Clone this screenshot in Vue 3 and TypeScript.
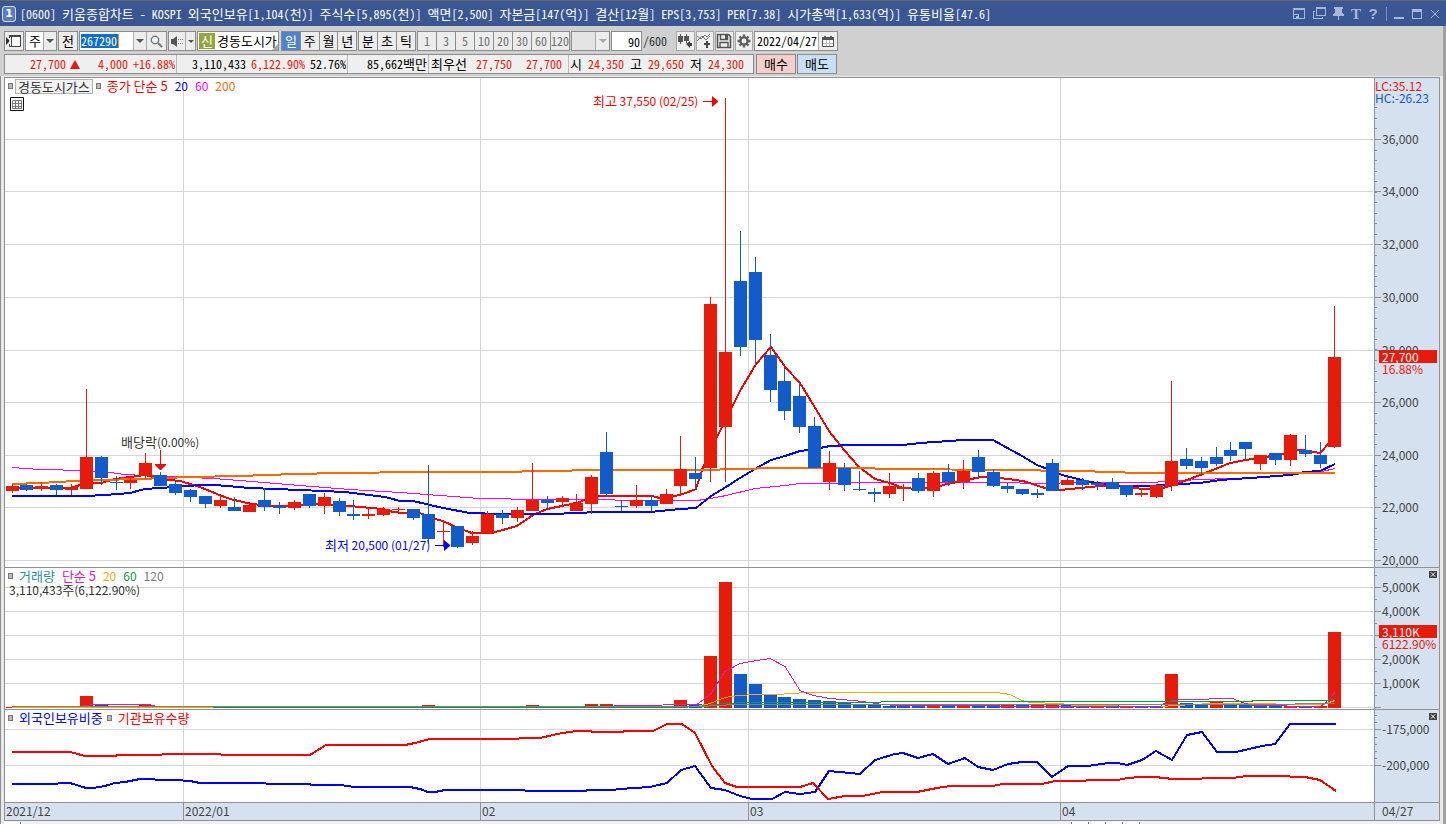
<script setup lang="ts">
import { ref } from 'vue'

type Side = 'r' | 'b'
type Candle = [Side, number, number, number, number]
interface Line { color: string; width: number; points: string }
interface Tick { label: string; y: number }

const PLOT_LEFT = 5
const PLOT_WIDTH = 1369
const PRICE_TOP = 78
const PRICE_HEIGHT = 489
const VOLUME_TOP = 568
const VOLUME_HEIGHT = 141
const HOLD_TOP = 710
const HOLD_HEIGHT = 92
const VOLUME_BASE = 708

const code = ref('267290')
const count = ref('90')
const date = ref('2022/04/27')
const period = ref('일')

const title = '[0600] 키움종합차트 - KOSPI 외국인보유[1,104(천)] 주식수[5,895(천)] 액면[2,500] 자본금[147(억)] 결산[12월] EPS[3,753] PER[7.38] 시가총액[1,633(억)] 유통비율[47.6]'
const titleParts = title.split(/([가-힣]+)/).map((text, i) => ({ text, hangul: i % 2 === 1 }))

const periods = ['일', '주', '월', '년']
const intraday = ['분', '초', '틱']
const minutes = ['1', '3', '5', '10', '20', '30', '60', '120']

const centre = (i: number) => Math.floor(12 + 14.865 * i)
const pctX = (x: number) => `${((x - PLOT_LEFT) / PLOT_WIDTH) * 100}%`
const pctY = (y: number, top: number, height: number) => `${((y - top) / height) * 100}%`

// side, high, body top, body bottom, low
const candles: Candle[] = [
  ['r', 484, 486, 491, 493], ['b', 484, 485, 490, 491], ['r', 482, 486, 489, 491], ['b', 484, 485, 490, 495],
  ['r', 484, 487, 490, 495], ['r', 389, 457, 489, 489], ['b', 456, 457, 478, 485], ['b', 476, 482, 483, 490],
  ['r', 476, 480, 483, 489], ['r', 453, 463, 476, 479], ['b', 472, 475, 486, 486], ['b', 482, 484, 493, 495],
  ['b', 489, 490, 497, 502], ['b', 496, 496, 504, 508], ['r', 495, 500, 506, 508], ['b', 497, 507, 511, 511],
  ['r', 504, 505, 512, 512], ['b', 488, 500, 507, 511], ['b', 502, 506, 508, 514], ['r', 500, 502, 508, 510],
  ['b', 494, 494, 506, 508], ['r', 493, 497, 506, 514], ['b', 498, 501, 512, 516], ['b', 500, 514, 516, 520],
  ['r', 509, 514, 516, 519], ['r', 507, 509, 515, 516], ['r', 507, 509, 510, 513], ['b', 509, 509, 518, 520],
  ['b', 465, 514, 539, 544], ['r', 522, 531, 532, 547], ['b', 526, 526, 547, 548], ['r', 531, 536, 543, 545],
  ['r', 511, 514, 533, 533], ['b', 510, 514, 518, 524], ['r', 507, 510, 518, 522], ['r', 463, 500, 511, 511],
  ['b', 496, 500, 503, 508], ['r', 496, 498, 502, 506], ['r', 494, 503, 511, 511], ['r', 475, 477, 504, 514],
  ['b', 432, 452, 494, 497], ['b', 500, 506, 507, 511], ['r', 485, 500, 506, 508], ['b', 497, 500, 506, 511],
  ['r', 489, 494, 504, 504], ['r', 436, 469, 486, 496], ['b', 457, 473, 479, 489], ['r', 297, 304, 468, 482],
  ['r', 98, 352, 427, 482], ['b', 231, 281, 347, 356], ['b', 257, 272, 340, 364], ['b', 334, 355, 390, 402],
  ['b', 368, 381, 411, 420], ['b', 382, 396, 427, 433], ['b', 417, 426, 468, 468], ['r', 451, 463, 482, 490],
  ['b', 463, 468, 485, 491], ['b', 471, 489, 490, 491], ['b', 488, 492, 494, 502], ['r', 473, 486, 494, 498],
  ['r', 484, 487, 489, 501], ['b', 473, 478, 491, 493], ['r', 471, 473, 491, 497], ['b', 464, 472, 482, 486],
  ['r', 460, 471, 482, 489], ['b', 450, 457, 472, 479], ['b', 469, 472, 486, 487], ['b', 483, 486, 489, 493],
  ['b', 489, 489, 494, 495], ['b', 489, 493, 495, 498], ['b', 459, 463, 491, 491], ['r', 477, 480, 485, 485],
  ['b', 478, 480, 485, 490], ['b', 481, 483, 485, 490], ['b', 478, 482, 489, 489], ['b', 485, 485, 495, 497],
  ['r', 490, 493, 495, 497], ['r', 484, 485, 497, 498], ['r', 381, 461, 486, 491], ['b', 448, 459, 466, 469],
  ['b', 457, 461, 468, 474], ['b', 447, 457, 464, 466], ['b', 442, 450, 456, 461], ['b', 442, 442, 449, 459],
  ['r', 455, 455, 464, 470], ['b', 453, 453, 460, 465], ['r', 434, 435, 460, 466], ['b', 435, 450, 454, 457],
  ['b', 442, 455, 464, 468], ['r', 306, 357, 447, 448],
]

const volumeTops: Record<number, [Side, number]> = {
  5: ['r', 696], 6: ['b', 705], 9: ['r', 705], 28: ['r', 705], 35: ['r', 705], 39: ['r', 704], 40: ['r', 704],
  41: ['b', 706], 42: ['b', 706], 43: ['b', 706], 44: ['r', 706], 45: ['r', 700], 46: ['b', 704], 47: ['r', 656],
  48: ['r', 582], 49: ['b', 674], 50: ['b', 684], 51: ['b', 694], 52: ['b', 697], 53: ['b', 699], 54: ['b', 700],
  55: ['b', 701], 56: ['b', 703], 57: ['b', 704], 58: ['b', 705], 59: ['b', 706], 60: ['b', 705], 61: ['b', 706],
  62: ['r', 705], 63: ['b', 705], 64: ['r', 705], 65: ['b', 705], 66: ['b', 705], 67: ['r', 705], 68: ['b', 705],
  69: ['r', 705], 70: ['r', 705], 71: ['b', 705], 72: ['b', 705], 73: ['r', 705], 74: ['b', 705], 75: ['r', 706],
  76: ['b', 706], 77: ['b', 706], 78: ['r', 674], 79: ['b', 703], 80: ['b', 705], 81: ['r', 702], 82: ['b', 704],
  83: ['b', 705], 84: ['b', 706], 85: ['b', 706], 86: ['r', 706], 87: ['b', 706], 88: ['r', 706], 89: ['r', 632],
}
const volumes = candles.map((c, i) => {
  const [side, top] = volumeTops[i] ?? [c[0], 707]
  return { side, top, x: centre(i) - 6 }
})

const priceLines: Line[] = [
  { color: '#ff00ff', width: 1, points: '12,467.5 40,469.5 85,470.5 110,472.5 125,474.5 165,476.5 190,477.5 213,478.5 240,480.5 300,485.5 350,489.5 400,492.5 480,498.5 540,499.5 600,499.5 630,500.5 697,500.5 711,498.5 726,495.5 755,488.5 785,485.5 800,483.5 900,482.5 1000,482.5 1040,483.5 1080,482.5 1150,482.5 1200,479.5 1260,477.5 1295,474.5 1322,471.5 1335,468.5' },
  { color: '#ff0000', width: 2, points: '12,488 71,488 86,483 101,483 115,479 145,475 160,479 180,481 200,487 217,494 230,499 247,503 267,506 287,506 320,504 340,505 360,507 383,509 393,512 402,513 420,513 435,519 443,521 458,528 472,533 492,533 517,526 533,515 547,509 562,506 580,502 590,497 600,496 652,496 663,499 683,494 696,489 703,467 717,437 726,419 740,391 756,364 771,347 786,368 800,383 814,406 829,431 844,450 859,467 875,479 890,483 903,488 918,489 933,488 947,484 963,481 980,477 993,477 1023,481 1045,488 1060,490 1080,488 1100,486 1120,486 1143,489 1160,489 1187,480 1203,474 1230,463 1257,458 1280,455 1290,451 1302,450 1320,453 1330,442 1335,437' },
  { color: '#0000ff', width: 2, points: '12,496 86,496 105,495 130,493 145,489 175,487 200,485 215,485 250,488 300,490 345,492 385,497 400,501 413,501 443,508 470,513 500,514 545,514 583,513 592,512 650,512 680,509 696,508 711,496 726,487 740,478 755,469 771,460 785,456 800,451 815,449 830,446 850,445 903,445 920,443 950,441 963,440 993,440 1002,445 1022,456 1037,465 1050,470 1062,475 1090,482 1120,486 1150,486 1180,484 1200,483 1220,480 1250,478 1290,475 1305,472 1320,471 1335,464' },
  { color: '#ff6a00', width: 2, points: '12,484 40,483 75,481 100,480 140,479 190,477 240,476 295,474 340,473 420,472 500,472 545,471 600,470 700,470 740,469 775,468 850,468 900,469 1000,470 1080,471 1140,473 1335,473' },
]

const volumeLines: Line[] = [
  { color: '#f5a800', width: 1, points: '12,707.5 80,707.5 585,707.5 697,706.5 710,703.5 725,697.5 738,695.5 757,694.5 777,694.5 807,692.5 960,692.5 997,692.5 1010,694.5 1022,700.5 1030,702.5 1060,703.5 1075,705.5 1160,706.5 1210,703.5 1253,703.5 1298,704.5 1323,704.5 1335,700.5' },
  { color: '#d81cb4', width: 1, points: '80,706.5 94,704.5 149,704.5 157,706.5 600,706.5 629,705.5 697,704.5 711,693.5 725,671.5 740,663.5 757,660.5 770,658.5 785,666.5 800,690.5 813,695.5 830,698.5 863,701.5 882,704.5 897,705.5 1100,706.5 1160,706.5 1167,701.5 1180,699.5 1208,699.5 1210,698.5 1233,698.5 1242,702.5 1253,705.5 1320,706.5 1325,703.5 1335,692.5' },
  { color: '#0c9a3c', width: 1, points: '213,707.5 680,707.5 697,706.5 725,703.5 747,702.5 880,702.5 882,701.5 1250,701.5 1255,700.5 1328,700.5 1335,699.5' },
  { color: '#808080', width: 1, points: '12,706.5 700,706.5 735,704.5 1290,704.5 1300,703.5 1335,703.5' },
]

const holdLines: Line[] = [
  { color: '#0000ff', width: 2, points: '12,784 56,784 60,783 70,783 86,788 93,788 105,786 115,783 125,782 140,779 150,779 160,780 175,780 190,781 200,783 262,783 270,784 309,784 312,785 340,785 355,787 410,787 420,789 428,792 435,792 445,790 524,790 526,791 583,791 590,790 612,790 620,789 650,787 667,783 681,770 695,766 711,788 725,790 740,796 752,799 772,799 785,792 800,794 815,792 829,771 860,774 875,760 895,754 903,753 918,758 933,754 948,764 965,758 978,767 993,770 1008,764 1022,762 1037,762 1052,777 1068,766 1088,766 1108,763 1118,763 1127,765 1142,760 1156,751 1172,760 1187,735 1202,732 1217,752 1236,752 1262,746 1275,744 1290,724 1336,724' },
  { color: '#ff0000', width: 2, points: '12,752 70,752 85,756 115,756 118,755 160,755 164,754 220,754 222,755 310,755 326,745 405,745 415,743 430,739 518,739 520,738 540,738 562,733 577,731 590,731 593,732 622,732 625,731 653,731 667,724 682,724 695,733 712,766 725,783 737,787 800,787 813,783 828,799 845,796 863,796 882,792 917,792 937,788 950,786 993,786 1002,784 1042,784 1055,781 1118,780 1127,778 1142,777 1155,777 1173,779 1232,778 1247,776 1275,776 1305,777 1320,780 1336,791' },
]

const priceTicks: Tick[] = [
  { label: '36,000', y: 139 }, { label: '34,000', y: 191 }, { label: '32,000', y: 244 }, { label: '30,000', y: 297 },
  { label: '28,000', y: 350 }, { label: '26,000', y: 402 }, { label: '24,000', y: 455 }, { label: '22,000', y: 507 },
  { label: '20,000', y: 560 },
]
const volumeTicks: Tick[] = [
  { label: '5,000K', y: 587 }, { label: '4,000K', y: 611 }, { label: '', y: 635 }, { label: '2,000K', y: 659 },
  { label: '1,000K', y: 683 }, { label: '', y: 707 },
]
const holdTicks: Tick[] = [{ label: '-175,000', y: 729 }, { label: '-200,000', y: 765 }]

const range = (from: number, to: number, step: number) => {
  const out: number[] = []
  for (let v = from; v <= to; v += step) out.push(Math.round(v))
  return out
}
const priceMinor = range(107.4, 560, 10.525)
const volumeMinor = range(575, 707, 12)
const holdMinor = range(715, 765, 7.2)

const months = [
  { label: '2021/12', x: 5 }, { label: '2022/01', x: 183 }, { label: '02', x: 480 }, { label: '03', x: 748 }, { label: '04', x: 1060 },
]
const monthLines = months.slice(1).map((m) => m.x)
</script>

<template>
  <div class="window">
    <header class="titlebar">
      <span class="badge">1</span>
      <h1 class="title"><span v-for="(p, i) in titleParts" :key="i" :class="{ ko: p.hangul }">{{ p.text }}</span></h1>
      <div class="winbtns">
        <button type="button" aria-label="화면 크기"><svg width="13" height="13" viewBox="0 0 13 13"><path d="M0 1H12V12H0ZM1 3V7H6V11H11V3ZM1 8V11H3V9H5V8Z" fill="currentColor" fill-rule="evenodd" /></svg></button>
        <button type="button" aria-label="화면 복사"><svg width="13" height="13" viewBox="0 0 13 13"><path d="M3 0H13V9H3ZM4 2V8H12V2Z" fill="currentColor" fill-rule="evenodd" /><path d="M0 4H2V5H1V11H9V10H10V12H0Z" fill="currentColor" /></svg></button>
        <button type="button" aria-label="고정"><svg width="11" height="14" viewBox="0 0 11 14"><path d="M1 0H10V2H9V6H10V7H11V9H6V13H5V9H0V7H1V6H2V2H1Z" fill="currentColor" /></svg></button>
        <button type="button" aria-label="글꼴" class="glyph">T</button>
        <button type="button" aria-label="도움말" class="glyph q">?</button>
        <i class="sep"></i>
        <button type="button" aria-label="최소화"><svg width="10" height="12" viewBox="0 0 10 12"><path d="M0 9H10V11H0Z" fill="currentColor" /></svg></button>
        <button type="button" aria-label="최대화" class="far"><svg width="10" height="12" viewBox="0 0 10 12"><path d="M0 1H10V11H0ZM1 4V10H9V4Z" fill="currentColor" fill-rule="evenodd" /></svg></button>
        <button type="button" aria-label="닫기" class="far"><svg width="10" height="12" viewBox="0 0 10 12"><path d="M1 2L9 10M9 2L1 10" stroke="currentColor" fill="none" /></svg></button>
      </div>
    </header>

    <div class="body">
      <div class="toolbars">
        <div class="row">
          <button type="button" class="btn w20" aria-label="패널"><svg width="16" height="14" viewBox="0 0 16 14"><path d="M0 3V11L4 7Z" fill="#333" /><path d="M3.5 4V1.5H14.5V12.5H3.5V10" fill="#fff" stroke="#444" /><path d="M3 1H15V3H3ZM5 3H6V13H5Z" fill="#444" /></svg></button>
          <div class="combo w32 ko"><select aria-label="종류"><option>주</option></select><i class="arrow"></i></div>
          <button type="button" class="btn w20 ko">전</button>
          <div class="combo code">
            <input v-model="code" class="codeinput" aria-label="종목코드" />
            <span class="spacer"></span>
            <button type="button" class="cell" aria-label="목록"><i class="tri"></i></button>
            <button type="button" class="cell search" aria-label="검색"><svg width="13" height="13" viewBox="0 0 13 13"><circle cx="5" cy="5" r="3.7" fill="#eef4f8" stroke="#777" stroke-width="1.4" /><path d="M8 8L12 12" stroke="#777" stroke-width="2" /></svg></button>
          </div>
          <div class="combo sound">
            <button type="button" class="cell wide" aria-label="소리"><svg width="14" height="13" viewBox="0 0 14 13"><path d="M1 4H3L7 1V12L3 9H1Z" fill="#555" /><path d="M8 4h1v1h-1zM8 8h1v1h-1zM10 4h1v1h-1zM10 8h1v1h-1zM12 4h1v1h-1zM12 8h1v1h-1z" fill="#777" /></svg></button>
            <button type="button" class="cell thin" aria-label="소리 목록"><i class="tri small"></i></button>
          </div>
          <div class="combo name ko"><b class="new">신</b><span>경동도시가</span><i class="corner"></i></div>
          <div class="tabs four ko">
            <button v-for="p in periods" :key="p" type="button" :class="{ on: p === period }" @click="period = p">{{ p }}</button>
          </div>
          <div class="tabs three ko"><button v-for="p in intraday" :key="p" type="button">{{ p }}</button></div>
          <div class="tabs eight"><button v-for="m in minutes" :key="m" type="button">{{ m }}</button></div>
          <div class="combo empty"><select aria-label="분 선택" disabled><option></option></select><i class="arrow"></i></div>
          <input v-model="count" class="count" aria-label="봉 개수" />
          <span class="total">/600</span>
          <div class="icons">
            <button type="button" aria-label="봉 추가"><svg width="17" height="16" viewBox="0 0 17 16"><path d="M3.500 1v10M9.500 1v9" stroke="#555" /><path d="M1 3h5v6H1zM7 3h5v5H7z" fill="#555" /><path d="M9 11L13 8V10H15V13H13V15Z" fill="#444" /></svg></button>
            <button type="button" aria-label="지표 추가"><svg width="17" height="16" viewBox="0 0 17 16"><path d="M1 3L5 6L9 2L11 4L14 1M1 8L6 3L10 7L14 3" fill="none" stroke="#777" /><path d="M10 8h2v2h2v2h-2v3h-2v-3H8v-2h2z" fill="#444" /></svg></button>
            <button type="button" aria-label="저장"><svg width="16" height="16" viewBox="0 0 16 16"><path d="M1.500 1.500H12.500L14.500 3.500V14.500H1.500Z" fill="none" stroke="#555" stroke-width="1.600" /><path d="M4.500 2V6.500H11.500V2M4 14V9.500H12V14" fill="none" stroke="#555" stroke-width="1.400" /><path d="M9 2h2v4H9z" fill="#555" /></svg></button>
            <button type="button" aria-label="설정"><svg width="16" height="16" viewBox="0 0 16 16"><circle cx="8" cy="8" r="3.6" fill="none" stroke="#606060" stroke-width="2.4" /><path d="M8 1.500V4M8 12V14.500M1.500 8H4M12 8H14.500M3.500 3.500L5 5M11 11L12.500 12.500M12.500 3.500L11 5M5 11L3.500 12.500" stroke="#606060" stroke-width="2.400" /></svg></button>
          </div>
          <div class="combo date">
            <input v-model="date" aria-label="날짜" />
            <button type="button" class="cell" aria-label="달력"><svg width="12" height="11" viewBox="0 0 12 11"><path d="M0.500 1.500H11.500V10.500H0.500Z" fill="#fff" stroke="#555" /><path d="M0 1H12V4H0ZM2 0H4V2H2ZM8 0H10V2H8Z" fill="#555" /><path d="M4.500 4V10M7.500 4V10M1 7.500H11" stroke="#bbb" /></svg></button>
          </div>
        </div>

        <div class="row quotes">
          <div class="quote">
            <div class="q c1"><span class="up">27,700</span><i class="triup"></i><span class="up">4,000</span><span class="up n3">+16.88%</span></div>
            <div class="q c2"><span>3,110,433</span><span class="up">6,122.90%</span><span>52.76%</span></div>
            <div class="q c3"><span>85,662</span><span class="ko">백만</span></div>
            <div class="q c4"><span class="ko">최우선</span><span class="up">27,750</span><span class="up">27,700</span></div>
            <div class="q c5"><span class="ko">시</span><span class="up">24,350</span><span class="ko">고</span><span class="up">29,650</span><span class="ko">저</span><span class="up">24,300</span></div>
          </div>
          <button type="button" class="order buy ko">매수</button>
          <button type="button" class="order sell ko">매도</button>
        </div>
      </div>

      <main class="stage">
        <div class="chart">
          <section class="pane price">
            <div class="plot">
              <svg class="canvas" :viewBox="`${PLOT_LEFT} ${PRICE_TOP} ${PLOT_WIDTH} ${PRICE_HEIGHT}`" preserveAspectRatio="none" shape-rendering="crispEdges">
                <g fill="#d6d6d6">
                  <rect v-for="t in priceTicks" :key="t.y" :x="PLOT_LEFT" :y="t.y" width="1368" height="1" />
                  <rect v-for="x in monthLines" :key="x" :x="x" :y="PRICE_TOP" width="1" :height="PRICE_HEIGHT" />
                </g>
                <polyline v-for="l in priceLines" :key="l.color" :points="l.points" fill="none" :stroke="l.color" :stroke-width="l.width" />
                <g v-for="(c, i) in candles" :key="i" :fill="c[0] === 'r' ? '#e81a0a' : '#115bcb'">
                  <rect :x="centre(i)" :y="c[1]" width="1" :height="c[4] - c[1]" />
                  <rect :x="centre(i) - 6" :y="c[2]" width="13" :height="c[3] - c[2]" />
                </g>
              </svg>
              <div class="legend">
                <i class="sq"></i><span class="stock ko">경동도시가스</span><i class="sq"></i>
                <span class="l-red ko">종가 단순 5</span><span class="l-blue">20</span><span class="l-mag">60</span><span class="l-org">200</span>
              </div>
              <button type="button" class="gridbtn" aria-label="표 보기"><svg width="14" height="14" viewBox="0 0 14 14"><path d="M0.500 0.500H13.500V13.500H0.500Z" fill="#fff" stroke="#111" /><path d="M2.500 3.500H11.500V11.500H2.500ZM2 6.500H12M2 9.500H12M5.500 3V12M8.500 3V12" fill="none" stroke="#777" /></svg></button>
              <div class="note red" :style="{ left: pctX(593), top: pctY(101, PRICE_TOP, PRICE_HEIGHT) }"><span class="ko">최고</span>&nbsp;37,550 (02/25)<svg width="16" height="12" viewBox="0 0 16 12"><path d="M0 6.500H10" stroke="currentColor" /><path d="M9 1V12L15 7V6Z" fill="currentColor" /></svg></div>
              <div class="note dark" :style="{ left: pctX(121), top: pctY(442, PRICE_TOP, PRICE_HEIGHT) }"><span class="ko">배당락</span>(0.00%)</div>
              <svg class="down" :style="{ left: pctX(155), top: pctY(450, PRICE_TOP, PRICE_HEIGHT) }" width="11" height="20" viewBox="0 0 11 20"><path d="M5 0H6V14H11V15L6 20H5L0 15V14H5Z" fill="#f00" /></svg>
              <div class="note blue" :style="{ left: pctX(325), top: pctY(545, PRICE_TOP, PRICE_HEIGHT) }"><span class="ko">최저</span>&nbsp;20,500 (01/27)<svg width="16" height="12" viewBox="0 0 16 12"><path d="M0 6.500H10" stroke="currentColor" /><path d="M9 1V12L15 7V6Z" fill="currentColor" /></svg></div>
            </div>
            <div class="axis">
              <i v-for="y in priceMinor" :key="y" class="minor" :style="{ top: pctY(y, PRICE_TOP, PRICE_HEIGHT) }"></i>
              <div v-for="t in priceTicks" :key="t.y" class="tick" :style="{ top: pctY(t.y, PRICE_TOP, PRICE_HEIGHT) }">{{ t.label }}</div>
              <div class="corner-info"><span class="up">LC:35.12</span><span class="down-text">HC:-26.23</span></div>
              <div class="now" :style="{ top: pctY(350, PRICE_TOP, PRICE_HEIGHT) }"><b>27,700</b><span>16.88%</span></div>
            </div>
          </section>

          <section class="pane volume">
            <div class="plot">
              <svg class="canvas" :viewBox="`${PLOT_LEFT} ${VOLUME_TOP} ${PLOT_WIDTH} ${VOLUME_HEIGHT}`" preserveAspectRatio="none" shape-rendering="crispEdges">
                <g fill="#d6d6d6">
                  <rect v-for="t in volumeTicks" :key="t.y" :x="PLOT_LEFT" :y="t.y" width="1368" height="1" />
                  <rect v-for="x in monthLines" :key="x" :x="x" :y="VOLUME_TOP" width="1" :height="VOLUME_HEIGHT" />
                </g>
                <rect v-for="(v, i) in volumes" :key="i" :x="v.x" :y="v.top" width="13" :height="VOLUME_BASE - v.top" :fill="v.side === 'r' ? '#e81a0a' : '#115bcb'" />
                <polyline v-for="l in volumeLines" :key="l.color" :points="l.points" fill="none" :stroke="l.color" :stroke-width="l.width" />
              </svg>
              <div class="legend">
                <i class="sq"></i><span class="l-teal ko">거래량</span><span class="l-pink ko">단순 5</span><span class="l-gold">20</span><span class="l-green">60</span><span class="l-gray">120</span>
              </div>
              <div class="volinfo">3,110,433<span class="ko">주</span>(6,122.90%)</div>
            </div>
            <div class="axis">
              <i v-for="y in volumeMinor" :key="y" class="minor" :style="{ top: pctY(y, VOLUME_TOP, VOLUME_HEIGHT) }"></i>
              <div v-for="t in volumeTicks" :key="t.y" class="tick" :style="{ top: pctY(t.y, VOLUME_TOP, VOLUME_HEIGHT) }">{{ t.label }}</div>
              <button type="button" class="close" aria-label="거래량 닫기"><svg width="8" height="7" viewBox="0 0 8 7"><path d="M2 1.500L6 5.500M6 1.500L2 5.500" stroke="#fff" /></svg></button>
              <div class="now" :style="{ top: pctY(625, VOLUME_TOP, VOLUME_HEIGHT) }"><b>3,110K</b><span>6122.90%</span></div>
            </div>
          </section>

          <section class="pane hold">
            <div class="plot">
              <svg class="canvas" :viewBox="`${PLOT_LEFT} ${HOLD_TOP} ${PLOT_WIDTH} ${HOLD_HEIGHT}`" preserveAspectRatio="none" shape-rendering="crispEdges">
                <g fill="#d6d6d6">
                  <rect v-for="t in holdTicks" :key="t.y" :x="PLOT_LEFT" :y="t.y" width="1368" height="1" />
                  <rect v-for="x in monthLines" :key="x" :x="x" :y="HOLD_TOP" width="1" :height="HOLD_HEIGHT" />
                </g>
                <polyline v-for="l in holdLines" :key="l.color" :points="l.points" fill="none" :stroke="l.color" :stroke-width="l.width" />
              </svg>
              <div class="legend tight ko">
                <i class="sq"></i><span class="l-blue">외국인보유비중</span><i class="sq"></i><span class="l-red">기관보유수량</span>
              </div>
            </div>
            <div class="axis">
              <i v-for="y in holdMinor" :key="y" class="minor" :style="{ top: pctY(y, HOLD_TOP, HOLD_HEIGHT) }"></i>
              <div v-for="t in holdTicks" :key="t.y" class="tick" :style="{ top: pctY(t.y, HOLD_TOP, HOLD_HEIGHT) }">{{ t.label }}</div>
              <button type="button" class="close" aria-label="보유 닫기"><svg width="8" height="7" viewBox="0 0 8 7"><path d="M2 1.500L6 5.500M6 1.500L2 5.500" stroke="#fff" /></svg></button>
            </div>
          </section>

          <footer class="dates">
            <div class="months">
              <span v-for="m in months" :key="m.label" class="month" :class="{ first: m.x === PLOT_LEFT }" :style="{ left: pctX(m.x) }">{{ m.label }}</span>
            </div>
            <div class="last">04/27</div>
          </footer>
        </div>
        <div class="under"><i class="first-tab"></i><i class="gap"></i><i class="t"></i><i class="t"></i><i class="t"></i><i class="t"></i><i class="tail"></i></div>
      </main>
    </div>
  </div>
</template>

<style>
body { margin: 0; background: #d0d0d0; }
</style>

<style scoped>
* { box-sizing: border-box; }
.window {
  height: 100vh; min-height: 480px; display: flex; flex-direction: column; overflow: hidden;
  font: 12px/16px "Noto Sans Mono CJK KR", "Noto Sans CJK KR", sans-serif; color: #000; background: #d0d0d0;
}
.ko { font-family: "Noto Sans CJK KR", sans-serif; font-size: 13px; }
button, input, select { font: inherit; color: inherit; margin: 0; padding: 0; border: 0; border-radius: 0; outline: 0; background: none; appearance: none; min-width: 0; }
button { display: flex; align-items: center; justify-content: center; cursor: pointer; }
button.ko { font-family: "Noto Sans CJK KR", sans-serif; font-size: 13px; }
svg { display: block; flex: none; }
.titlebar { flex: none; height: 26px; display: flex; align-items: center; background: #3a5693; border-top: 1px solid #666; color: #fff; padding: 0 6px 0 2px; }
.badge { width: 14px; height: 16px; border: 1px solid #d6def0; border-radius: 3px; background: #5b7ac0; font: bold 11px/14px "DejaVu Sans", sans-serif; text-align: center; margin-right: 4px; flex: none; }
.title { margin: 0; font: inherit; flex: 1; white-space: pre; overflow: hidden; line-height: 24px; }
.winbtns { display: flex; align-items: center; gap: 7px; color: #a9b7d6; }
.winbtns button { height: 16px; }
.glyph { width: 10px; font: bold 15px/16px "Liberation Serif", serif; }
.q.glyph { font-family: "Liberation Sans", sans-serif; }
.sep { width: 1px; height: 14px; background: #7f90ba; margin-left: 1px; }
.far { margin-left: 1px; }
.body { flex: 1; min-height: 0; display: flex; flex-direction: column; border-right: 3px solid #a0a0a0; }
.toolbars { flex: none; display: flex; flex-direction: column; gap: 3px; padding: 5px 0 2px 4px; }
.row { display: flex; gap: 1px; height: 20px; white-space: nowrap; }
.row > * { flex: none; }
.btn, .combo, .tabs, .count, .order { border: 1px solid #8c8c8c; background: #ececec; height: 20px; }
.w20 { width: 20px; }
.w32 { width: 32px; }
.combo { display: flex; align-items: stretch; background: #fff; position: relative; }
.combo select { flex: 1; width: 0; padding-left: 3px; }
.arrow { width: 13px; border-left: 1px solid #aaa; background: #ececec; display: flex; align-items: center; justify-content: center; pointer-events: none; }
.arrow::after, .tri { content: ""; width: 0; height: 0; border: 4px solid transparent; border-top-color: #555; border-bottom: 0; }
.cell { width: 13px; background: #ececec; border-left: 1px solid #aaa; }
.cell.search { width: 20px; }
.cell.wide { flex: 1; border-left: 0; }
.cell.thin { width: 10px; }
.tri.small { border-width: 3px; border-bottom: 0; }
.code { width: 88px; }
.codeinput { width: 38px; height: 14px; margin: 2px 0 2px 1px; background: #0a6fd0; color: #fff; border-right: 1px solid #f58a1f; line-height: 14px; }
.spacer { flex: 1; }
.sound { width: 28px; }
.name { width: 82px; margin-right: 1px; align-items: center; overflow: hidden; }
.new { width: 16px; height: 16px; margin: 0 2px 0 1px; background: #93a63c; color: #fff; font-weight: 400; text-align: center; }
.corner { position: absolute; right: 0; bottom: 0; border: 3px solid #aaa; border-top-color: transparent; border-left-color: transparent; }
.tabs { display: flex; }
.tabs button { flex: 1; }
.tabs button + button { border-left: 1px solid #8c8c8c; }
.tabs button.on { background: #4f83c9; color: #fff; }
.four { width: 76px; }
.three { width: 58px; }
.eight { width: 153px; color: #707070; }
.empty { width: 39px; background: #e4e4e4; }
.empty .arrow { width: 14px; }
.empty .arrow::after { border-top-color: #aaa; }
.count { width: 31px; background: #fff; text-align: right; padding-right: 1px; }
.total { width: 32px; line-height: 20px; color: #333; }
.icons { display: flex; width: 77px; gap: 1px; }
.icons button { flex: 1; height: 20px; border: 1px solid #a8a8a8; background: #eee; }
.date { width: 84px; }
.date input { flex: 1; width: 0; padding-left: 2px; }
.date .cell { width: 19px; }
.quotes { gap: 2px; }
.quote { display: flex; width: 750px; height: 20px; border: 1px solid #8c8c8c; background: #efefef; line-height: 18px; }
.q { display: flex; align-items: center; }
.q + .q { border-left: 1px solid #bbb; }
.up { color: #e81a0a; }
.c1 { width: 171px; justify-content: flex-end; padding-right: 1px; }
.c2 { width: 171px; justify-content: flex-end; gap: 5px; padding-right: 1px; }
.c3 { width: 81px; justify-content: flex-end; padding-right: 1px; }
.c4 { width: 140px; padding-left: 2px; gap: 14px; }
.c4 span:first-child { margin-right: -5px; }
.c5 { flex: 1; padding-left: 1px; gap: 6px; }
.triup { border: 5px solid transparent; border-bottom: 9px solid #e81a0a; border-top: 0; margin: 0 18px 0 4px; }
.n3 { margin-left: 5px; }
.order { width: 40px; height: 20px; }
.buy { background: #f5d0cb; }
.sell { background: #c8dff5; margin-left: -1px; }
.stage { flex: 1; min-height: 0; display: flex; flex-direction: column; border-left: 1px solid #909090; background: #e8e8e8; padding: 1px 3px 0 3px; }
.chart { flex: 1; min-height: 0; display: flex; flex-direction: column; border: 1px solid #919191; border-bottom: 0; background: #fff; font: 12px/14px "Noto Sans CJK KR", sans-serif; }
.pane { display: flex; min-height: 0; border-bottom: 1px solid #919191; }
.price { flex: 489 1 0; }
.volume { flex: 141 1 0; }
.hold { flex: 92 1 0; }
.plot { flex: 1; position: relative; min-width: 0; }
.canvas { position: absolute; inset: 0; width: 100%; height: 100%; }
.legend { position: relative; display: flex; align-items: center; gap: 7px; height: 16px; padding-left: 3px; white-space: nowrap; }
.volume .legend { height: 15px; }
.sq { width: 5px; height: 6px; border: 1px solid #777; background: #bbb; margin-right: -1px; flex: none; }
.stock { border: 1px solid #b4b4b4; background: #f2f2f2; padding: 0 2px; line-height: 13px; margin: 0 -4px; color: #333; }
.l-red { color: #f00; }
.l-blue { color: #00f; }
.l-mag { color: #f0f; }
.l-org { color: #ff6a00; }
.l-teal { color: #2b9090; }
.l-pink { color: #d81cb4; }
.l-gold { color: #f5a800; }
.l-green { color: #0c9a3c; }
.l-gray { color: #777; }
.tight span { margin-right: -3px; }
.volinfo { position: relative; padding-left: 4px; line-height: 13px; color: #333; }
.gridbtn { position: relative; margin: 3px 0 0 5px; }
.note { position: absolute; margin-top: -7px; display: flex; align-items: center; white-space: pre; }
.note svg { margin-left: 5px; }
.note.red { color: #f00; }
.note.blue { color: #00f; }
.note.dark { color: #333; }
.down { position: absolute; }
.axis { position: relative; width: 65px; flex: none; border-left: 1px solid #919191; background: #d6e1ef; color: #444; }
.tick { position: absolute; left: 0; margin-top: -7px; padding-left: 7px; height: 14px; white-space: nowrap; }
.tick::before { content: ""; position: absolute; left: 0; top: 7px; width: 6px; height: 1px; background: #919191; }
.minor { position: absolute; left: 0; width: 2px; height: 1px; background: #919191; }
.corner-info { display: flex; flex-direction: column; line-height: 12px; padding-top: 2px; }
.down-text { color: #115bcb; }
.now { position: absolute; left: 4px; right: 2px; color: #e81a0a; line-height: 12px; }
.now b { display: block; font-weight: 400; line-height: 13px; background: #e81a0a; color: #fff; padding-left: 3px; }
.now span { padding-left: 3px; }
.close { position: absolute; right: 2px; top: 3px; width: 8px; height: 7px; background: #444; }
.dates { flex: none; display: flex; height: 18px; background: #d6e1ef; border-bottom: 1px solid #919191; color: #444; line-height: 16px; }
.months { position: relative; flex: 1; }
.month { position: absolute; top: 0; height: 17px; padding-left: 1px; border-left: 1px solid #919191; }
.month.first { border-left: 0; }
.last { width: 65px; border-left: 1px solid #919191; padding-left: 7px; }
.under { flex: none; height: 3px; display: flex; background: #f0f0f0; }
.under i { border-right: 1px solid #777; margin-top: 1px; }
.under .first-tab { width: 17px; background: #fff; }
.under .gap { flex: 1; }
.under .t { width: 17px; background: #fff; }
.under .tail { width: 300px; border: 0; }
</style>
